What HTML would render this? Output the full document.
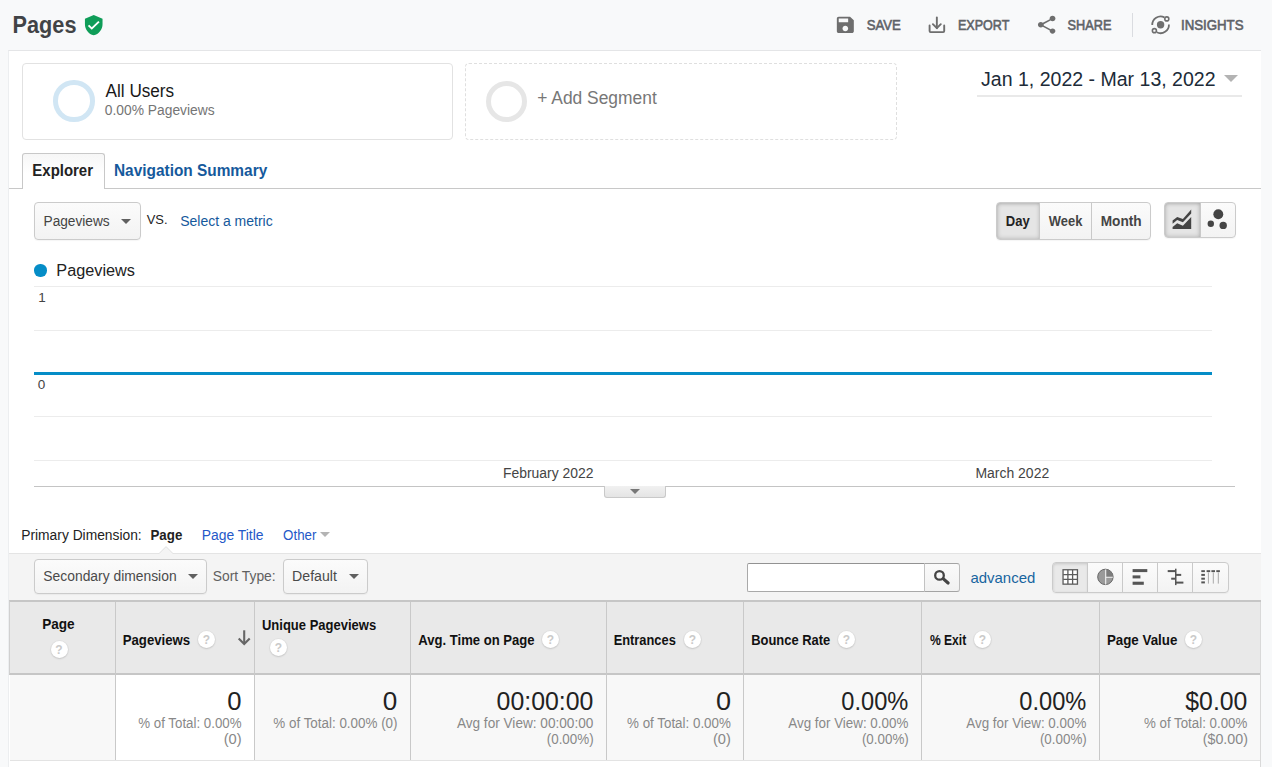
<!DOCTYPE html>
<html lang="en">
<head>
<meta charset="utf-8">
<title>Pages - Analytics</title>
<style>
*{box-sizing:border-box;margin:0;padding:0}
html,body{width:1272px;height:767px;overflow:hidden}
body{position:relative;background:#f8f9fa;font-family:"Liberation Sans",sans-serif;color:#222}
.a{position:absolute}
.t{position:absolute;white-space:pre;transform-origin:0 0}
.panel{left:8px;top:50px;width:1253px;height:717px;background:#fff;border-left:1px solid #eceef0;border-top:1px solid #e4e5e7}
.seg1{left:22px;top:63px;width:431px;height:77px;border:1px solid #e2e2e2;border-radius:4px;background:#fff}
.seg2{left:465px;top:63px;width:432px;height:77px;border:1px dashed #dfdfdf;border-radius:4px;background:#fff}
.ring{border-radius:50%;width:41px;height:41px}
.btn{border:1px solid #cbcbcb;border-radius:4px;background:linear-gradient(#fbfbfb,#f3f3f3);box-shadow:0 1px 1px rgba(0,0,0,.04)}
.on{background:#e5e5e5;box-shadow:inset 0 0 5px rgba(0,0,0,.2),inset 0 1px 3px rgba(0,0,0,.1)}
.tri{width:0;height:0;border-left:5px solid transparent;border-right:5px solid transparent;border-top:5px solid #606060}
.grid{left:34px;width:1178px;height:1px;background:#ececec}
.q{position:absolute;width:17px;height:17px;border-radius:50%;background:#fff;box-shadow:0 0 0 1px rgba(0,0,0,.03),0 1px 2px rgba(0,0,0,.12);color:#cacaca;font-weight:700;font-size:12px;line-height:18.4px;text-align:center}
.vl{position:absolute;width:1px;background:#c9c9c9}
</style>
</head>
<body>

<!-- ===== header bar ===== -->
<svg class="a" style="left:81.97px;top:14.1px" width="23.47" height="22.3" viewBox="0 0 24 24" preserveAspectRatio="none"><path d="M6 8h12v10H6z" fill="#fff"/><path fill="#0f9d58" d="M12 1L3 5v6c0 5.55 3.84 10.74 9 12 5.16-1.26 9-6.45 9-12V5l-9-4zm-2 16l-4-4 1.41-1.41L10 14.17l6.59-6.59L18 9l-8 8z"/></svg>
<svg class="a" style="left:834.25px;top:13.88px" width="22.67" height="21.7" viewBox="0 0 24 24" preserveAspectRatio="none"><path fill="#6e6e6e" d="M17 3H5c-1.11 0-2 .9-2 2v14c0 1.1.89 2 2 2h14c1.1 0 2-.9 2-2V7l-4-4zm-5 16c-1.66 0-3-1.34-3-3s1.34-3 3-3 3 1.34 3 3-1.34 3-3 3zm3-10H5V5h10v4z"/></svg>
<svg class="a" style="left:926px;top:13px" width="24" height="24" viewBox="926 13 24 24"><g fill="none" stroke="#6e6e6e" stroke-width="1.9" stroke-linecap="round" stroke-linejoin="round"><path d="M929.6 25.4V31.1a1 1 0 0 0 1 1h12.6a1 1 0 0 0 1-1V25.4"/><path d="M936.85 17.4V28"/><path d="M932.9 24.2l3.95 4 3.95-4"/></g></svg>
<svg class="a" style="left:1034.8px;top:14.1px" width="23.4" height="21.6" viewBox="0 0 24 24" preserveAspectRatio="none"><path fill="#6e6e6e" d="M18 16.08c-.76 0-1.44.3-1.96.77L8.91 12.7c.05-.23.09-.46.09-.7s-.04-.47-.09-.7l7.05-4.11c.54.5 1.25.81 2.04.81 1.66 0 3-1.34 3-3s-1.34-3-3-3-3 1.34-3 3c0 .24.04.47.09.7L8.04 9.81C7.5 9.31 6.79 9 6 9c-1.66 0-3 1.34-3 3s1.34 3 3 3c.79 0 1.5-.31 2.04-.81l7.12 4.16c-.05.21-.08.43-.08.65 0 1.61 1.31 2.92 2.92 2.92 1.61 0 2.92-1.31 2.92-2.92s-1.31-2.92-2.92-2.92z"/></svg>
<div class="a" style="left:1132px;top:13px;width:1px;height:24px;background:#dadce0"></div>
<svg class="a" style="left:1148px;top:12px" width="26" height="26" viewBox="1148 12 26 26"><circle cx="1160.6" cy="24.8" r="3.7" fill="#6e6e6e"/><g fill="none" stroke="#6e6e6e" stroke-width="1.8" stroke-linecap="butt"><path d="M1152.26 25.09A8.35 8.35 0 0 1 1164.39 17.36"/><path d="M1168.94 24.51A8.35 8.35 0 0 1 1156.81 32.24"/><circle cx="1166.8" cy="18.9" r="2.0" stroke-width="1.6"/><circle cx="1154.4" cy="30.66" r="2.0" stroke-width="1.6"/></g></svg>

<!-- ===== white report panel ===== -->
<div class="a panel"></div>

<!-- segments -->
<div class="a seg1"></div>
<div class="a ring" style="left:53.4px;top:80.4px;width:41.4px;height:41.4px;border:5px solid #d1e6f4"></div>
<div class="a seg2"></div>
<div class="a ring" style="left:486px;top:80.5px;border:5px solid #e6e6e6"></div>

<!-- date range -->
<div class="a" style="left:977px;top:95px;width:265px;height:2px;background:#e9e9e9"></div>
<div class="a" style="left:1224px;top:75px;width:0;height:0;border-left:7.2px solid transparent;border-right:7.2px solid transparent;border-top:7.8px solid #b3b3b3"></div>

<!-- tabs -->
<div class="a" style="left:9px;top:187.5px;width:1252px;height:1px;background:#c8c8c8"></div>
<div class="a" style="left:22px;top:153px;width:83px;height:36px;border:1px solid #c8c8c8;border-bottom:none;border-radius:3px 3px 0 0;background:linear-gradient(#f6f6f6,#fff 55%)"></div>

<!-- metric selector -->
<div class="a btn" style="left:34px;top:202px;width:107px;height:38px"></div>
<div class="a tri" style="left:121px;top:218.5px"></div>

<!-- day / week / month -->
<div class="a btn" style="left:996px;top:202px;width:155px;height:38px"></div>
<div class="a on" style="left:997px;top:203px;width:42.5px;height:36px;border-radius:3px 0 0 3px"></div>
<div class="vl" style="left:1039px;top:203px;height:36px"></div>
<div class="vl" style="left:1091px;top:203px;height:36px"></div>

<!-- chart type -->
<div class="a btn" style="left:1164px;top:202px;width:72px;height:36px"></div>
<div class="a on" style="left:1165px;top:203px;width:35px;height:34px;border-radius:3px 0 0 3px"></div>
<div class="vl" style="left:1200px;top:203px;height:34px"></div>
<svg class="a" style="left:1168px;top:206px" width="28" height="28" viewBox="1168 206 28 28"><path fill="#444" d="M1172.6 229V227.1L1177.2 223.2L1182.9 225.7L1191.2 216.9V229Z"/><path fill="#444" d="M1172.6 220.6L1177.2 216.9L1182.9 219.1L1191.2 209.4V213.4L1182.9 222.3L1177.2 220.1L1172.6 223.7Z"/></svg>
<svg class="a" style="left:1204px;top:206px" width="28" height="28" viewBox="1204 206 28 28"><circle cx="1218.3" cy="214.3" r="4.95" fill="#444"/><circle cx="1210.8" cy="223.7" r="3.2" fill="#444"/><circle cx="1223.2" cy="225.4" r="3.7" fill="#444"/></svg>

<!-- legend + chart -->
<div class="a" style="left:34.2px;top:264.2px;width:12.4px;height:12.4px;border-radius:50%;background:#058dc7"></div>
<div class="a grid" style="top:286px"></div>
<div class="a grid" style="top:330px"></div>
<div class="a grid" style="top:416px"></div>
<div class="a grid" style="top:460px"></div>
<div class="a" style="left:34px;top:372px;width:1178px;height:3px;background:#058dc7"></div>
<div class="a" style="left:34px;top:486px;width:1201px;height:1px;background:#c4c4c4"></div>
<div class="a" style="left:604px;top:486px;width:62px;height:11.5px;border:1px solid #c9c9c9;border-top:none;border-radius:0 0 3px 3px;background:linear-gradient(#f1f1f1,#e4e4e4)"></div>
<div class="a" style="left:630.3px;top:488.7px;width:0;height:0;border-left:5px solid transparent;border-right:5px solid transparent;border-top:5px solid #777"></div>

<!-- primary dimension -->
<div class="a" style="left:320px;top:532px;width:0;height:0;border-left:5.3px solid transparent;border-right:5.3px solid transparent;border-top:5.3px solid #b4b4b4"></div>

<!-- table toolbar -->
<div class="a" style="left:9px;top:553px;width:1252px;height:47px;background:#f4f4f4;border-top:1px solid #e4e4e4"></div>
<svg class="a" style="left:158px;top:545px" width="16" height="9" viewBox="0 0 16 9"><path d="M1 8.6 L8 1.6 L15 8.6 Z" fill="#f4f4f4" stroke="#e0e0e0" stroke-width="1"/><rect x="1.6" y="8" width="12.8" height="1.2" fill="#f4f4f4"/></svg>
<div class="a btn" style="left:34px;top:559px;width:173px;height:35px"></div>
<div class="a tri" style="left:187.5px;top:574.3px"></div>
<div class="a btn" style="left:283px;top:559px;width:85px;height:35px"></div>
<div class="a tri" style="left:348.5px;top:574.3px"></div>
<!-- search -->
<div class="a" style="left:747px;top:563px;width:178px;height:29px;background:#fff;border:1px solid #a9a9a9;border-top-color:#929292;border-right-color:#c2c2c2;border-radius:2px 0 0 2px"></div>
<div class="a" style="left:924px;top:563px;width:36px;height:29px;border:1px solid #a4a4a4;border-left-color:#c2c2c2;border-right-color:#bdbdbd;border-radius:0 3px 3px 0;background:linear-gradient(#fafafa,#f1f1f1)"></div>
<!-- view buttons -->
<div class="a btn" style="left:1052px;top:562px;width:177px;height:31px"></div>
<div class="a on" style="left:1053px;top:563px;width:34.5px;height:29px;border-radius:3px 0 0 3px;background:#e9e9e9;box-shadow:inset 0 1px 3px rgba(0,0,0,.15)"></div>
<div class="vl" style="left:1087px;top:563px;height:29px"></div>
<div class="vl" style="left:1122px;top:563px;height:29px"></div>
<div class="vl" style="left:1157px;top:563px;height:29px"></div>
<div class="vl" style="left:1192px;top:563px;height:29px"></div>
<svg class="a" style="left:930px;top:566px" width="24" height="24" viewBox="930 566 24 24"><circle cx="939.5" cy="575.4" r="4.3" fill="none" stroke="#444" stroke-width="2.3"/><path d="M943.4 578.9L948.1 583" stroke="#444" stroke-width="3.2" stroke-linecap="round"/></svg>
<svg class="a" style="left:1060px;top:567px" width="20" height="20" viewBox="1060 567 20 20"><g fill="none" stroke="#5c5c5c" stroke-width="1.3"><rect x="1063.05" y="569.75" width="14.4" height="14.4" fill="#fff"/><path d="M1067.9 569.9V584M1072.6 569.9V584M1063.2 574.6H1077.3M1063.2 579.3H1077.3"/></g></svg>
<svg class="a" style="left:1095px;top:567px" width="20" height="20" viewBox="1095 567 20 20"><circle cx="1105.4" cy="576.9" r="7.7" fill="#9a9a9a" stroke="#666" stroke-width="1"/><path d="M1105.4 576.9V569.2A7.7 7.7 0 0 1 1113.1 576.9Z" fill="#7d7d7d"/><path d="M1105.7 569.6V584.4M1105.7 577.2H1112.8" stroke="#f4f4f4" stroke-width="1.1" fill="none"/></svg>
<svg class="a" style="left:1130px;top:567px" width="20" height="20" viewBox="1130 567 20 20"><g fill="#555"><rect x="1132.6" y="569.1" width="14.7" height="3"/><rect x="1132.6" y="575.4" width="7.8" height="3"/><rect x="1132.6" y="581.7" width="11.2" height="3.1"/></g></svg>
<svg class="a" style="left:1165px;top:567px" width="20" height="20" viewBox="1165 567 20 20"><g fill="#555"><rect x="1175" y="568.7" width="1.5" height="16.4"/><rect x="1167.7" y="570.1" width="8" height="2"/><rect x="1176" y="573.9" width="5.2" height="2"/><rect x="1171.2" y="577.7" width="4.6" height="2"/><rect x="1176" y="581.6" width="7.4" height="2"/></g></svg>
<svg class="a" style="left:1199px;top:567px" width="24" height="20" viewBox="1199 567 24 20"><g fill="#555"><rect x="1201.3" y="570.2" width="3.6" height="1.9"/><rect x="1206.6" y="570.2" width="3.6" height="1.9"/><rect x="1211.4" y="570.2" width="3.6" height="1.9"/><rect x="1216.3" y="570.2" width="3.6" height="1.9"/><rect x="1201.3" y="573.9" width="3.6" height="2"/><rect x="1201.3" y="577.7" width="3.6" height="2"/><rect x="1201.3" y="581.4" width="3.6" height="2"/></g><g fill="#a8a8a8"><rect x="1207.9" y="572.4" width="1" height="11.2"/><rect x="1212.8" y="572.4" width="1" height="11.2"/><rect x="1217.8" y="572.4" width="1" height="11.2"/></g></svg>

<!-- table header -->
<div class="a" style="left:9px;top:600px;width:1252px;height:75px;background:#e9e9e9;border-top:2px solid #c6c6c6;border-bottom:2px solid #c6c6c6;border-left:1px solid #d0d0d0"></div>
<!-- table body row -->
<div class="a" style="left:10px;top:675px;width:1251px;height:86px;background:#f8f8f8;border-bottom:1px solid #e3e3e3"></div>
<div class="a" style="left:116px;top:675px;width:138px;height:85px;background:#fff"></div>
<!-- column rules -->
<div class="vl" style="left:115px;top:602px;height:158px"></div>
<div class="vl" style="left:254px;top:602px;height:158px"></div>
<div class="vl" style="left:410px;top:602px;height:158px"></div>
<div class="vl" style="left:606px;top:602px;height:158px"></div>
<div class="vl" style="left:743px;top:602px;height:158px"></div>
<div class="vl" style="left:921px;top:602px;height:158px"></div>
<div class="vl" style="left:1099px;top:602px;height:158px"></div>
<div class="vl" style="left:1260px;top:602px;height:165px;background:#d9d9d9"></div>
<!-- help badges -->
<div class="q" style="left:50.5px;top:641px">?</div>
<div class="q" style="left:198px;top:631px">?</div>
<div class="q" style="left:269.8px;top:639px">?</div>
<div class="q" style="left:542px;top:631px">?</div>
<div class="q" style="left:684px;top:631px">?</div>
<div class="q" style="left:838px;top:631px">?</div>
<div class="q" style="left:974px;top:631px">?</div>
<div class="q" style="left:1185px;top:631px">?</div>
<svg class="a" style="left:236px;top:628px" width="18" height="20" viewBox="236 628 18 20"><g fill="none" stroke="#666" stroke-width="2.1"><path d="M244.2 630.3V643.5"/><path d="M238.7 638.4l5.5 5.5 5.5-5.5"/></g></svg>

<!-- ===== text layer ===== -->
<div class="t" style="left:12px;top:12px;font-size:23px;line-height:26px;font-weight:700;transform:translate(0.58px,0) scale(0.9426,1);transform-origin:0 21px;color:#414346;">Pages</div>
<div class="t" style="left:866px;top:17px;font-size:14px;line-height:16px;transform:translate(0.72px,0) scale(0.9409,1);transform-origin:0 13px;color:#5f6368;-webkit-text-stroke:0.6px;">SAVE</div>
<div class="t" style="left:958px;top:17px;font-size:14px;line-height:16px;transform:translate(0.01px,0) scale(0.8951,1);transform-origin:0 13px;color:#5f6368;-webkit-text-stroke:0.6px;">EXPORT</div>
<div class="t" style="left:1067px;top:17px;font-size:14px;line-height:16px;transform:translate(0.57px,0) scale(0.9084,1);transform-origin:0 13px;color:#5f6368;-webkit-text-stroke:0.6px;">SHARE</div>
<div class="t" style="left:1180px;top:17px;font-size:14px;line-height:16px;transform:translate(0.96px,0) scale(0.946,1);transform-origin:0 13px;color:#5f6368;-webkit-text-stroke:0.6px;">INSIGHTS</div>
<div class="t" style="left:105px;top:81px;font-size:18px;line-height:20px;transform:translate(0.59px,0) scale(0.9521,1);transform-origin:0 16px;color:#181818;">All Users</div>
<div class="t" style="left:104px;top:102px;font-size:14px;line-height:16px;transform:translate(0.82px,0) scale(0.9864,1);transform-origin:0 13px;color:#757575;">0.00% Pageviews</div>
<div class="t" style="left:537px;top:88px;font-size:18px;line-height:20px;transform:translate(0.26px,0) scale(0.9667,1);transform-origin:0 16px;color:#777;">+ Add Segment</div>
<div class="t" style="left:981px;top:68px;font-size:20px;line-height:22px;transform:translate(0.11px,0) scale(0.976,1);transform-origin:0 18px;color:#202b38;">Jan 1, 2022 - Mar 13, 2022</div>
<div class="t" style="left:32px;top:162px;font-size:16px;line-height:17px;font-weight:700;transform:translate(0.35px,0) scale(0.9342,1);transform-origin:0 14px;color:#222;">Explorer</div>
<div class="t" style="left:113px;top:162px;font-size:16px;line-height:17px;font-weight:700;transform:translate(0.99px,0) scale(0.9626,1);transform-origin:0 14px;color:#15599c;">Navigation Summary</div>
<div class="t" style="left:43px;top:213px;font-size:14px;line-height:16px;transform:translate(0.5px,0) scale(0.9774,1);transform-origin:0 13px;color:#444;">Pageviews</div>
<div class="t" style="left:146px;top:212px;font-size:13px;line-height:15px;transform:translate(0.71px,0) scale(0.9917,1);transform-origin:0 12px;color:#222;">VS.</div>
<div class="t" style="left:180px;top:213px;font-size:14px;line-height:16px;transform:translate(0.21px,0) scale(0.9988,1);transform-origin:0 13px;color:#15599c;">Select a metric</div>
<div class="t" style="left:1005px;top:213px;font-size:14px;line-height:16px;font-weight:700;transform:translate(0.84px,0) scale(0.9306,1);transform-origin:0 13px;color:#222;">Day</div>
<div class="t" style="left:1048px;top:213px;font-size:14px;line-height:16px;font-weight:700;transform:translate(0.82px,0) scale(0.9228,1);transform-origin:0 13px;color:#444;">Week</div>
<div class="t" style="left:1100px;top:213px;font-size:14px;line-height:16px;font-weight:700;transform:translate(0.7px,0) scale(0.9747,1);transform-origin:0 13px;color:#444;">Month</div>
<div class="t" style="left:56px;top:262px;font-size:16px;line-height:17px;transform:translate(0.32px,0) scale(1.0169,1);transform-origin:0 14px;color:#222;">Pageviews</div>
<div class="t" style="left:38px;top:290px;font-size:13.5px;line-height:15px;transform:translate(0.24px,0) scale(1,1);transform-origin:0 12px;color:#444;">1</div>
<div class="t" style="left:37px;top:377px;font-size:13.5px;line-height:15px;transform:translate(0.8px,0) scale(1,1);transform-origin:0 12px;color:#444;">0</div>
<div class="t" style="left:502px;top:465px;font-size:14px;line-height:16px;transform:translate(0.97px,0) scale(0.9944,1);transform-origin:0 13px;color:#444;">February 2022</div>
<div class="t" style="left:975px;top:465px;font-size:14px;line-height:16px;transform:translate(0.4px,0) scale(0.9978,1);transform-origin:0 13px;color:#444;">March 2022</div>
<div class="t" style="left:21px;top:527px;font-size:14px;line-height:16px;transform:translate(0.24px,0) scale(0.9862,1);transform-origin:0 13px;color:#222;">Primary Dimension:</div>
<div class="t" style="left:150px;top:527px;font-size:14px;line-height:16px;font-weight:700;transform:translate(0.44px,0) scale(0.9522,1);transform-origin:0 13px;color:#222;">Page</div>
<div class="t" style="left:201px;top:527px;font-size:14px;line-height:16px;transform:translate(0.83px,0) scale(0.9898,1);transform-origin:0 13px;color:#2458c8;">Page Title</div>
<div class="t" style="left:283px;top:527px;font-size:14px;line-height:16px;transform:translate(0.1px,0) scale(0.9493,1);transform-origin:0 13px;color:#2458c8;">Other</div>
<div class="t" style="left:43px;top:568px;font-size:14px;line-height:16px;transform:translate(0.35px,0) scale(0.9896,1);transform-origin:0 13px;color:#4a4a4a;">Secondary dimension</div>
<div class="t" style="left:212px;top:568px;font-size:14px;line-height:16px;transform:translate(0.85px,0) scale(0.988,1);transform-origin:0 13px;color:#606060;">Sort Type:</div>
<div class="t" style="left:292px;top:568px;font-size:14px;line-height:16px;transform:translate(0.08px,0) scale(1.0094,1);transform-origin:0 13px;color:#4a4a4a;">Default</div>
<div class="t" style="left:970px;top:569px;font-size:15px;line-height:17px;transform:translate(0.47px,0) scale(0.9961,1);transform-origin:0 14px;color:#17659f;">advanced</div>
<div class="t" style="left:42px;top:616px;font-size:14px;line-height:16px;font-weight:700;transform:translate(0.2px,0) scale(0.9703,1);transform-origin:0 13px;color:#111;">Page</div>
<div class="t" style="left:122px;top:632px;font-size:14px;line-height:16px;font-weight:700;transform:translate(0.66px,0) scale(0.9433,1);transform-origin:0 13px;color:#111;">Pageviews</div>
<div class="t" style="left:261px;top:617px;font-size:14px;line-height:16px;font-weight:700;transform:translate(0.98px,0) scale(0.9285,1);transform-origin:0 13px;color:#111;">Unique Pageviews</div>
<div class="t" style="left:418px;top:632px;font-size:14px;line-height:16px;font-weight:700;transform:translate(0.35px,0) scale(0.9332,1);transform-origin:0 13px;color:#111;">Avg. Time on Page</div>
<div class="t" style="left:613px;top:632px;font-size:14px;line-height:16px;font-weight:700;transform:translate(0.68px,0) scale(0.9174,1);transform-origin:0 13px;color:#111;">Entrances</div>
<div class="t" style="left:751px;top:632px;font-size:14px;line-height:16px;font-weight:700;transform:translate(0.18px,0) scale(0.9233,1);transform-origin:0 13px;color:#111;">Bounce Rate</div>
<div class="t" style="left:929px;top:632px;font-size:14px;line-height:16px;font-weight:700;transform:translate(0.91px,0) scale(0.8652,1);transform-origin:0 13px;color:#111;">% Exit</div>
<div class="t" style="left:1106px;top:632px;font-size:14px;line-height:16px;font-weight:700;transform:translate(0.88px,0) scale(0.9533,1);transform-origin:0 13px;color:#111;">Page Value</div>
<div class="t" style="left:227px;top:687px;font-size:25px;line-height:28px;transform:translate(0.37px,0) scale(1.025,1);transform-origin:0 23px;color:#222;">0</div>
<div class="t" style="left:382px;top:687px;font-size:25px;line-height:28px;transform:translate(0.83px,0) scale(1.0417,1);transform-origin:0 23px;color:#222;">0</div>
<div class="t" style="left:496px;top:687px;font-size:25px;line-height:28px;transform:translate(0.57px,0) scale(0.9946,1);transform-origin:0 23px;color:#222;">00:00:00</div>
<div class="t" style="left:715px;top:687px;font-size:25px;line-height:28px;transform:translate(0.91px,0) scale(1.0833,1);transform-origin:0 23px;color:#222;">0</div>
<div class="t" style="left:841px;top:687px;font-size:25px;line-height:28px;transform:translate(0.34px,0) scale(0.9456,1);transform-origin:0 23px;color:#222;">0.00%</div>
<div class="t" style="left:1019px;top:687px;font-size:25px;line-height:28px;transform:translate(0.34px,0) scale(0.9456,1);transform-origin:0 23px;color:#222;">0.00%</div>
<div class="t" style="left:1185px;top:687px;font-size:25px;line-height:28px;transform:translate(0.29px,0) scale(0.9926,1);transform-origin:0 23px;color:#222;">$0.00</div>
<div class="t" style="left:138px;top:715px;font-size:14px;line-height:16px;transform:translate(0.31px,0) scale(0.9497,1);transform-origin:0 13px;color:#888;">% of Total: 0.00%</div>
<div class="t" style="left:223px;top:731px;font-size:14px;line-height:16px;transform:translate(0.64px,0) scale(1.0503,1);transform-origin:0 13px;color:#888;">(0)</div>
<div class="t" style="left:273px;top:715px;font-size:14px;line-height:16px;transform:translate(0.32px,0) scale(0.9576,1);transform-origin:0 13px;color:#888;">% of Total: 0.00% (0)</div>
<div class="t" style="left:456px;top:715px;font-size:14px;line-height:16px;transform:translate(0.88px,0) scale(0.9722,1);transform-origin:0 13px;color:#888;">Avg for View: 00:00:00</div>
<div class="t" style="left:546px;top:731px;font-size:14px;line-height:16px;transform:translate(0.71px,0) scale(0.9572,1);transform-origin:0 13px;color:#888;">(0.00%)</div>
<div class="t" style="left:627px;top:715px;font-size:14px;line-height:16px;transform:translate(0.03px,0) scale(0.9555,1);transform-origin:0 13px;color:#888;">% of Total: 0.00%</div>
<div class="t" style="left:712px;top:731px;font-size:14px;line-height:16px;transform:translate(0.93px,0) scale(1.0469,1);transform-origin:0 13px;color:#888;">(0)</div>
<div class="t" style="left:788px;top:715px;font-size:14px;line-height:16px;transform:translate(0.28px,0) scale(0.9559,1);transform-origin:0 13px;color:#888;">Avg for View: 0.00%</div>
<div class="t" style="left:861px;top:731px;font-size:14px;line-height:16px;transform:translate(0.9px,0) scale(0.9553,1);transform-origin:0 13px;color:#888;">(0.00%)</div>
<div class="t" style="left:966px;top:715px;font-size:14px;line-height:16px;transform:translate(0.28px,0) scale(0.9559,1);transform-origin:0 13px;color:#888;">Avg for View: 0.00%</div>
<div class="t" style="left:1039px;top:731px;font-size:14px;line-height:16px;transform:translate(0.9px,0) scale(0.9553,1);transform-origin:0 13px;color:#888;">(0.00%)</div>
<div class="t" style="left:1144px;top:715px;font-size:14px;line-height:16px;transform:translate(0.01px,0) scale(0.9499,1);transform-origin:0 13px;color:#888;">% of Total: 0.00%</div>
<div class="t" style="left:1202px;top:731px;font-size:14px;line-height:16px;transform:translate(0.69px,0) scale(1.0197,1);transform-origin:0 13px;color:#888;">($0.00)</div>

</body>
</html>
